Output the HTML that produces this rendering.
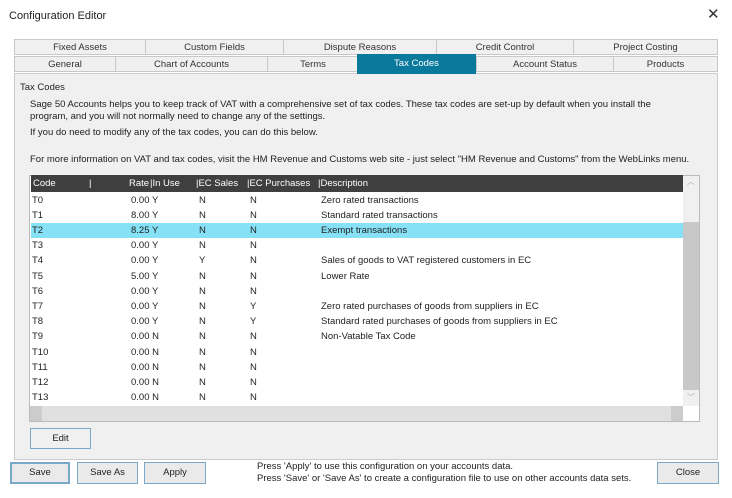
<!DOCTYPE html><html><head><style>
body{margin:0;width:732px;height:498px;background:#fff;font-family:"Liberation Sans",sans-serif;font-size:9.5px;color:#222;position:relative;overflow:hidden}
.a{position:absolute;white-space:nowrap}
.tab{position:absolute;height:16px;border:1px solid #c8c8c8;background:#f0f0f0;text-align:center;line-height:15px;box-sizing:border-box;color:#333}
.btn{position:absolute;border:1px solid #7aa8c8;background:#eaeaea;box-sizing:border-box;text-align:center;line-height:20px}
.row{position:absolute;left:31px;width:652px;height:15px;line-height:15px}
.row span{position:absolute}
</style></head><body>
<div class="a" style="left:9px;top:10px;font-size:11px">Configuration Editor</div>
<div class="a" style="left:707px;top:5px;font-size:15px;color:#333">✕</div>
<div class="tab" style="left:14px;top:39px;width:132px">Fixed Assets</div>
<div class="tab" style="left:145px;top:39px;width:139px">Custom Fields</div>
<div class="tab" style="left:283px;top:39px;width:154px">Dispute Reasons</div>
<div class="tab" style="left:436px;top:39px;width:138px">Credit Control</div>
<div class="tab" style="left:573px;top:39px;width:145px">Project Costing</div>
<div class="tab" style="left:14px;top:56px;width:102px">General</div>
<div class="tab" style="left:115px;top:56px;width:153px">Chart of Accounts</div>
<div class="tab" style="left:267px;top:56px;width:92px">Terms</div>
<div class="tab" style="left:476px;top:56px;width:138px">Account Status</div>
<div class="tab" style="left:613px;top:56px;width:105px">Products</div>
<div class="a" style="left:14px;top:73px;width:704px;height:387px;background:#f0f0f0;border:1px solid #ccc;box-sizing:border-box"></div>
<div class="tab" style="left:357px;top:54px;width:119px;height:20px;background:#0a7a9c;color:#fff;border-color:#0a7a9c;line-height:17px">Tax Codes</div>
<div class="a" style="left:20px;top:82px">Tax Codes</div>
<div class="a" style="left:30px;top:99px;line-height:12px">Sage 50 Accounts helps you to keep track of VAT with a comprehensive set of tax codes. These tax codes are set-up by default when you install the<br>program, and you will not normally need to change any of the settings.</div>
<div class="a" style="left:30px;top:127px">If you do need to modify any of the tax codes, you can do this below.</div>
<div class="a" style="left:30px;top:154px">For more information on VAT and tax codes, visit the HM Revenue and Customs web site - just select "HM Revenue and Customs" from the WebLinks menu.</div>
<div class="a" style="left:29px;top:175px;width:671px;height:247px;background:#fff;border:1px solid #bbb;box-sizing:border-box"></div>
<div class="row" style="top:175px;height:17px;line-height:17px;background:#3f3f3f;color:#fff"><span style="left:2px">Code</span><span style="left:58px">|</span><span style="left:98px">Rate</span><span style="left:119px">|In Use</span><span style="left:165px">|EC Sales</span><span style="left:216px">|EC Purchases</span><span style="left:287px">|Description</span></div>
<div class="a" style="left:683px;top:176px;width:16px;height:230px;background:#c8c8c8"></div>
<div class="a" style="left:683px;top:176px;width:16px;height:16px;background:#f0f0f0;color:#aaa;font-size:8px;text-align:center">︿</div>
<div class="a" style="left:683px;top:192px;width:16px;height:30px;background:#f0f0f0"></div>
<div class="a" style="left:683px;top:390px;width:16px;height:16px;background:#f0f0f0;color:#aaa;font-size:8px;text-align:center;line-height:16px">﹀</div>
<div class="a" style="left:30px;top:406px;width:653px;height:15px;background:#e0e0e0"></div>
<div class="a" style="left:30px;top:406px;width:12px;height:15px;background:#ccc"></div>
<div class="a" style="left:671px;top:406px;width:12px;height:15px;background:#ccc"></div>
<div id="rows"></div>
<div class="btn" style="left:30px;top:428px;width:61px;height:21px;background:#f0f0f0">Edit</div>
<div class="btn" style="left:10px;top:462px;width:60px;height:22px;border:2px solid #7aa8c8;line-height:18px">Save</div>
<div class="btn" style="left:77px;top:462px;width:61px;height:22px">Save As</div>
<div class="btn" style="left:144px;top:462px;width:62px;height:22px">Apply</div>
<div class="btn" style="left:657px;top:462px;width:62px;height:22px">Close</div>
<div class="a" style="left:257px;top:461px;line-height:12px">Press 'Apply' to use this configuration on your accounts data.<br>Press 'Save' or 'Save As' to create a configuration file to use on other accounts data sets.</div>
<script>
var d=[["T0","0.00 Y","N","N","Zero rated transactions"],["T1","8.00 Y","N","N","Standard rated transactions"],["T2","8.25 Y","N","N","Exempt transactions"],["T3","0.00 Y","N","N",""],["T4","0.00 Y","Y","N","Sales of goods to VAT registered customers in EC"],["T5","5.00 Y","N","N","Lower Rate"],["T6","0.00 Y","N","N",""],["T7","0.00 Y","N","Y","Zero rated purchases of goods from suppliers in EC"],["T8","0.00 Y","N","Y","Standard rated purchases of goods from suppliers in EC"],["T9","0.00 N","N","N","Non-Vatable Tax Code"],["T10","0.00 N","N","N",""],["T11","0.00 N","N","N",""],["T12","0.00 N","N","N",""],["T13","0.00 N","N","N",""]];
var h="";d.forEach(function(r,i){h+='<div class="row" style="top:'+(192.5+i*15.2)+'px;width:652px;'+(i==2?'background:#86e0f6':'')+'"><span style="left:1px">'+r[0]+'</span><span style="left:100px">'+r[1]+'</span><span style="left:168px">'+r[2]+'</span><span style="left:219px">'+r[3]+'</span><span style="left:290px">'+r[4]+'</span></div>'});
document.getElementById("rows").innerHTML=h;
</script>
</body></html>
